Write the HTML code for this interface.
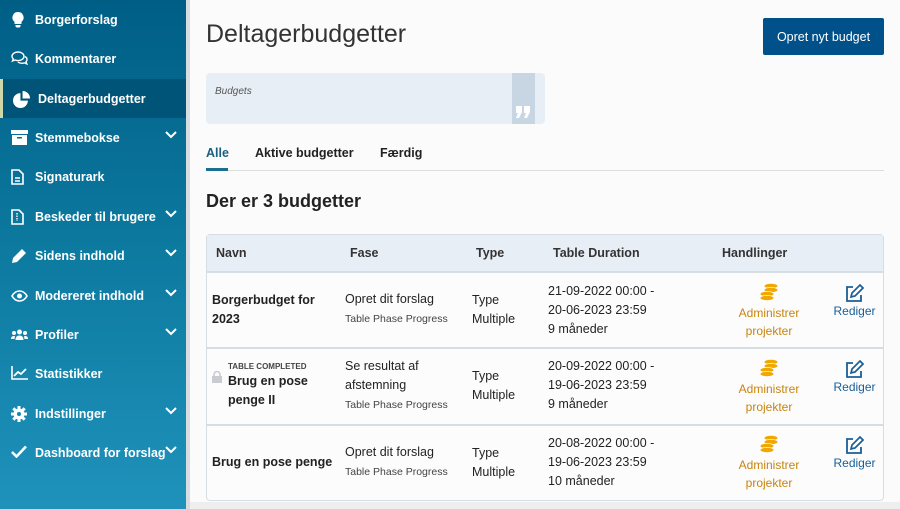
<!DOCTYPE html>
<html><head><meta charset="utf-8"><style>
*{box-sizing:border-box;margin:0;padding:0}
body{width:900px;height:509px;overflow:hidden;background:#fbfbfb;font-family:"Liberation Sans",sans-serif;color:#222;position:relative}
.sb{position:absolute;left:0;top:0;width:186px;height:509px;background:linear-gradient(180deg,#005e85 0%,#0d7aa0 50%,#1f92bb 100%)}
.strip{position:absolute;left:186px;top:0;width:4px;height:509px;background:#d8dde2}
.it{position:absolute;left:0;width:186px;height:39px;color:#fff;font-weight:bold;font-size:12.5px;display:flex;align-items:center;padding-left:35px}
.it svg.ic{position:absolute;left:11px;top:12px}
.chev{position:absolute;left:165px;top:13px}
.act{background:#005478;border-left:3px solid #cfd6a8}
.abs{position:absolute}
h1{position:absolute;left:206px;top:20px;font-weight:normal;font-size:25px;color:#333}
.btn{position:absolute;left:763px;top:18px;width:121px;height:37px;background:#00508a;color:#fff;font-size:12.5px;border-radius:2px;display:flex;align-items:center;justify-content:center}
.quote{position:absolute;left:206px;top:73px;width:339px;height:51px;background:#e8eef6;border-radius:4px}
.tabs{position:absolute;left:206px;top:170px;width:678px;border-top:1px solid #ddd}
.tab{position:absolute;top:146px;font-weight:bold;font-size:12.5px;color:#222}
.tbl{position:absolute;left:206px;top:234px;width:678px;height:267px;border:1px solid #d6dde4;border-radius:4px;background:#fcfcfc}
.hd{position:absolute;left:0;top:0;width:676px;height:38px;background:#e8eef6;border-bottom:2px solid #d6dde4}
.hd span{position:absolute;top:11px;font-weight:bold;font-size:12.5px;color:#333}
.row{position:absolute;left:0;width:676px;border-bottom:2px solid #d6dde4}
.t{position:absolute;font-size:12.5px;line-height:19px;color:#222}
.s{font-size:10.5px;color:#444}
.adm{position:absolute;left:522px;width:80px;text-align:center;color:#c8840d;font-size:12px;line-height:18px}
.adm svg,.red svg{display:block;margin:0 auto 1px}
.red{position:absolute;left:620px;width:55px;text-align:center;color:#1a5e97;font-size:12px;line-height:16px}
</style></head><body>
<div class="sb"></div><div class="strip"></div>
<div class="it" style="top:0"><svg class="ic" width="14" height="16" viewBox="0 0 14 16"><path d="M7 0a5.5 5.5 0 0 0-3.5 9.8V12h7V9.8A5.5 5.5 0 0 0 7 0zM4.5 13h5v1.5l-1 1h-3l-1-1z" fill="#fff"/></svg>Borgerforslag</div>
<div class="it" style="top:39px"><svg class="ic" width="17" height="14" viewBox="0 0 17 14"><path d="M7 1C3.5 1 1 3 1 5.3c0 1 .5 2 1.3 2.7L1.5 10l2.5-1c1 .4 2 .6 3 .6 3.5 0 6-2 6-4.3S10.5 1 7 1zM14 5.5c1.3.7 2 1.8 2 3 0 1-.4 1.8-1 2.4l.8 2-2.5-1c-.8.3-1.6.4-2.4.4-1.5 0-3-.5-4-1.3" fill="none" stroke="#fff" stroke-width="1.4"/></svg>Kommentarer</div>
<div class="it act" style="top:79px"><svg class="ic" width="17" height="17" viewBox="0 0 16 16" style="left:10px"><path d="M7 2a7 7 0 1 0 7 7H7z" fill="#fff"/><path d="M9 0v7h7a7 7 0 0 0-7-7z" fill="#fff"/></svg>Deltagerbudgetter</div>
<div class="it" style="top:118px"><svg class="ic" width="17" height="15" viewBox="0 0 17 15"><rect x="0" y="0" width="17" height="4" fill="#fff"/><rect x="1" y="5" width="15" height="10" fill="#fff"/><rect x="6" y="7" width="5" height="1.5" fill="#0a6a92"/></svg>Stemmebokse<svg class="chev" width="12" height="8" viewBox="0 0 12 8"><path d="M1 1l5 5 5-5" fill="none" stroke="#fff" stroke-width="2"/></svg></div>
<div class="it" style="top:157px"><svg class="ic" width="13" height="16" viewBox="0 0 13 16"><path d="M1 1h7l4 4v10H1z" fill="none" stroke="#fff" stroke-width="1.6"/><path d="M4 9h5M4 12h5" stroke="#fff" stroke-width="1.4"/></svg>Signaturark</div>
<div class="it" style="top:197px"><svg class="ic" width="13" height="16" viewBox="0 0 13 16"><path d="M1 1h7l4 4v10H1z" fill="none" stroke="#fff" stroke-width="1.6"/><path d="M6 4v8" stroke="#fff" stroke-width="1.4" stroke-dasharray="1.5 1"/></svg>Beskeder til brugere<svg class="chev" width="12" height="8" viewBox="0 0 12 8"><path d="M1 1l5 5 5-5" fill="none" stroke="#fff" stroke-width="2"/></svg></div>
<div class="it" style="top:236px"><svg class="ic" width="16" height="16" viewBox="0 0 16 16"><path d="M11 1l4 4-9 9-5 1 1-5z" fill="#fff"/></svg>Sidens indhold<svg class="chev" width="12" height="8" viewBox="0 0 12 8"><path d="M1 1l5 5 5-5" fill="none" stroke="#fff" stroke-width="2"/></svg></div>
<div class="it" style="top:276px"><svg class="ic" width="17" height="12" viewBox="0 0 17 12" style="top:14px"><path d="M1 6c2-3.5 4.5-5 7.5-5S14 2.5 16 6c-2 3.5-4.5 5-7.5 5S3 9.5 1 6z" fill="none" stroke="#fff" stroke-width="1.6"/><circle cx="8.5" cy="6" r="2.5" fill="#fff"/></svg>Modereret indhold<svg class="chev" width="12" height="8" viewBox="0 0 12 8"><path d="M1 1l5 5 5-5" fill="none" stroke="#fff" stroke-width="2"/></svg></div>
<div class="it" style="top:315px"><svg class="ic" width="17" height="12" viewBox="0 0 17 12" style="top:14px"><circle cx="8.5" cy="3" r="2.5" fill="#fff"/><circle cx="3" cy="4" r="2" fill="#fff"/><circle cx="14" cy="4" r="2" fill="#fff"/><path d="M4.5 11c0-3 1.5-4.5 4-4.5s4 1.5 4 4.5zM0 10c0-2 1-3 3-3l1 .3L3.5 10zM17 10c0-2-1-3-3-3l-1 .3.5 2.7z" fill="#fff"/></svg>Profiler<svg class="chev" width="12" height="8" viewBox="0 0 12 8"><path d="M1 1l5 5 5-5" fill="none" stroke="#fff" stroke-width="2"/></svg></div>
<div class="it" style="top:354px"><svg class="ic" width="17" height="14" viewBox="0 0 17 14"><path d="M1 0v13h16" fill="none" stroke="#fff" stroke-width="1.6"/><path d="M3 10l4-4 3 2 5-5" fill="none" stroke="#fff" stroke-width="1.8"/></svg>Statistikker</div>
<div class="it" style="top:394px"><svg class="ic" width="16" height="16" viewBox="0 0 16 16"><circle cx="8" cy="8" r="5.5" fill="#fff"/><path d="M8 0v16M0 8h16M2.3 2.3l11.4 11.4M13.7 2.3L2.3 13.7" stroke="#fff" stroke-width="3"/><circle cx="8" cy="8" r="2" fill="#1488b0"/></svg>Indstillinger<svg class="chev" width="12" height="8" viewBox="0 0 12 8"><path d="M1 1l5 5 5-5" fill="none" stroke="#fff" stroke-width="2"/></svg></div>
<div class="it" style="top:433px"><svg class="ic" width="16" height="13" viewBox="0 0 16 13"><path d="M1 7l4.5 4.5L15 1.5" fill="none" stroke="#fff" stroke-width="2.6"/></svg>Dashboard for forslag<svg class="chev" width="12" height="8" viewBox="0 0 12 8"><path d="M1 1l5 5 5-5" fill="none" stroke="#fff" stroke-width="2"/></svg></div>

<h1>Deltagerbudgetter</h1>
<div class="btn">Opret nyt budget</div>
<div class="quote"><i class="abs" style="left:9px;top:13px;font-size:10px;color:#555">Budgets</i><div class="abs" style="left:306px;top:0;width:23px;height:51px;background:#c8d6e3"><svg class="abs" style="left:4px;top:33px" width="14" height="12" viewBox="0 0 14 12"><path d="M0 0h6v6l-3 6H0l2-5H0zM8 0h6v6l-3 6H8l2-5H8z" fill="#fff"/></svg></div></div>
<div class="tabs"></div>
<div class="tab" style="left:206px;color:#1a5e80">Alle</div>
<div class="abs" style="left:206px;top:168px;width:22px;height:3px;background:#1a6e92"></div>
<div class="tab" style="left:255px">Aktive budgetter</div>
<div class="tab" style="left:380px">Færdig</div>
<div class="abs" style="left:206px;top:191px;font-weight:bold;font-size:18px;color:#222">Der er 3 budgetter</div>
<div class="abs" style="left:190px;top:502px;width:710px;height:7px;background:#eeeeee"></div>

<div class="tbl">
<div class="hd"><span style="left:9px">Navn</span><span style="left:143px">Fase</span><span style="left:269px">Type</span><span style="left:346px">Table Duration</span><span style="left:515px">Handlinger</span></div>

<div class="row" style="top:38px;height:76px">
<div class="t" style="left:5px;top:18px;font-weight:bold">Borgerbudget for<br>2023</div>
<div class="t" style="left:138px;top:17px">Opret dit forslag<br><span class="s">Table Phase Progress</span></div>
<div class="t" style="left:265px;top:18px">Type<br>Multiple</div>
<div class="t" style="left:341px;top:9px">21-09-2022 00:00 -<br>20-06-2023 23:59<br>9 måneder</div>
<div class="adm" style="top:10px"><svg width="20" height="20" viewBox="0 0 20 20"><g fill="#f0a800" stroke="#fcfcfc" stroke-width=".8"><ellipse cx="12" cy="3" rx="7" ry="2.6"/><ellipse cx="12" cy="7" rx="7" ry="2.6"/><ellipse cx="8" cy="11" rx="7" ry="2.6"/><ellipse cx="8" cy="15" rx="7" ry="2.6"/></g></svg>Administrer<br>projekter</div>
<div class="red" style="top:11px"><svg width="19" height="18" viewBox="0 0 19 18"><path d="M8 3H2v14h14v-6" fill="none" stroke="#1a5e97" stroke-width="1.8"/><path d="M15 1l3 3-8 8-4 1 1-4z" fill="none" stroke="#1a5e97" stroke-width="1.7"/></svg>Rediger</div>
</div>

<div class="row" style="top:114px;height:77px">
<svg class="abs" style="left:5px;top:22px" width="10" height="12" viewBox="0 0 10 12"><rect x="0" y="5" width="10" height="7" fill="#c8ccd0"/><path d="M2 5V3.5a3 3 0 0 1 6 0V5" fill="none" stroke="#c8ccd0" stroke-width="1.6"/></svg>
<div class="abs" style="left:21px;top:13px;font-size:8px;font-weight:bold;color:#444">TABLE COMPLETED</div>
<div class="t" style="left:21px;top:23px;font-weight:bold">Brug en pose<br>penge II</div>
<div class="t" style="left:138px;top:8px">Se resultat af<br>afstemning<br><span class="s">Table Phase Progress</span></div>
<div class="t" style="left:265px;top:18px">Type<br>Multiple</div>
<div class="t" style="left:341px;top:8px">20-09-2022 00:00 -<br>19-06-2023 23:59<br>9 måneder</div>
<div class="adm" style="top:10px"><svg width="20" height="20" viewBox="0 0 20 20"><g fill="#f0a800" stroke="#fcfcfc" stroke-width=".8"><ellipse cx="12" cy="3" rx="7" ry="2.6"/><ellipse cx="12" cy="7" rx="7" ry="2.6"/><ellipse cx="8" cy="11" rx="7" ry="2.6"/><ellipse cx="8" cy="15" rx="7" ry="2.6"/></g></svg>Administrer<br>projekter</div>
<div class="red" style="top:11px"><svg width="19" height="18" viewBox="0 0 19 18"><path d="M8 3H2v14h14v-6" fill="none" stroke="#1a5e97" stroke-width="1.8"/><path d="M15 1l3 3-8 8-4 1 1-4z" fill="none" stroke="#1a5e97" stroke-width="1.7"/></svg>Rediger</div>
</div>

<div class="row" style="top:191px;height:75px;border-bottom:none">
<div class="t" style="left:5px;top:27px;font-weight:bold">Brug en pose penge</div>
<div class="t" style="left:138px;top:17px">Opret dit forslag<br><span class="s">Table Phase Progress</span></div>
<div class="t" style="left:265px;top:18px">Type<br>Multiple</div>
<div class="t" style="left:341px;top:8px">20-08-2022 00:00 -<br>19-06-2023 23:59<br>10 måneder</div>
<div class="adm" style="top:9px"><svg width="20" height="20" viewBox="0 0 20 20"><g fill="#f0a800" stroke="#fcfcfc" stroke-width=".8"><ellipse cx="12" cy="3" rx="7" ry="2.6"/><ellipse cx="12" cy="7" rx="7" ry="2.6"/><ellipse cx="8" cy="11" rx="7" ry="2.6"/><ellipse cx="8" cy="15" rx="7" ry="2.6"/></g></svg>Administrer<br>projekter</div>
<div class="red" style="top:10px"><svg width="19" height="18" viewBox="0 0 19 18"><path d="M8 3H2v14h14v-6" fill="none" stroke="#1a5e97" stroke-width="1.8"/><path d="M15 1l3 3-8 8-4 1 1-4z" fill="none" stroke="#1a5e97" stroke-width="1.7"/></svg>Rediger</div>
</div>
</div>
</body></html>
